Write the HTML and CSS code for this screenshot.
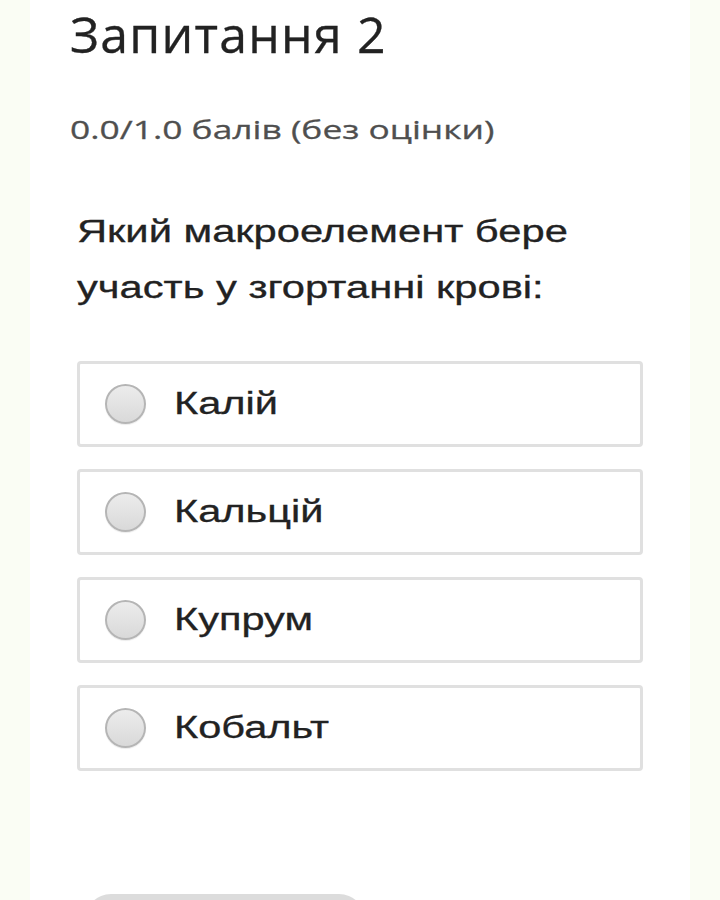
FILE: index.html
```html
<!DOCTYPE html>
<html lang="uk">
<head>
<meta charset="utf-8">
<link rel="stylesheet" href="styles.css">
</head>
<body>
<main class="card">
  <h1 class="title">Запитання 2</h1>
  <p class="score">0.0/1.0 балів (без оцінки)</p>
  <div class="body">
    <p class="question">Який макроелемент бере участь у згортанні крові:</p>
    <ul class="options">
      <li class="option"><span class="radio"></span><span class="label">Калій</span></li>
      <li class="option"><span class="radio"></span><span class="label">Кальцій</span></li>
      <li class="option"><span class="radio"></span><span class="label">Купрум</span></li>
      <li class="option"><span class="radio"></span><span class="label">Кобальт</span></li>
    </ul>
    <div class="actions"><button class="submit" type="button"></button></div>
  </div>
</main>
</body>
</html>
```
FILE: styles.css
```css
html, body {
  margin: 0;
  padding: 0;
  background: #fafdf4;
  height: 900px;
  overflow: hidden;
}
.card {
  margin: 0 30px;
  background: #ffffff;
  padding: 0 47px 0 40px;
  height: 900px;
  box-sizing: border-box;
  overflow: hidden;
}
.title {
  margin: 0;
  padding: 0;
  font-family: "Open Sans", sans-serif;
  font-weight: 400;
  font-size: 50px;
  line-height: 68px;
  letter-spacing: 1.2px;
  color: #222222;
  -webkit-text-stroke: 0.3px #222222;
}
.score {
  width: max-content;
  margin: 41px 0 0;
  font-family: "Open Sans", sans-serif;
  font-size: 26px;
  line-height: 40px;
  color: #4f4f4f;
  transform: scaleX(1.36);
  transform-origin: 0 50%;
  -webkit-text-stroke: 0.3px #4f4f4f;
}
.body {
  padding-left: 7px;
}
.question {
  width: 425px;
  margin: 55px 0 0;
  font-family: "Liberation Sans", Arial, sans-serif;
  font-size: 31px;
  line-height: 56px;
  color: #222222;
  transform: scaleX(1.345);
  transform-origin: 0 0;
  -webkit-text-stroke: 0.3px #222222;
}
.options {
  list-style: none;
  margin: 45px 0 0;
  padding: 0;
  display: flex;
  flex-direction: column;
  gap: 22px;
}
.option {
  height: 86px;
  box-sizing: border-box;
  border: 3px solid #e0e0e0;
  border-radius: 4px;
  display: flex;
  align-items: center;
  padding-left: 25px;
  gap: 28px;
}
.radio {
  width: 41px;
  height: 40px;
  box-sizing: border-box;
  border-radius: 50%;
  border: 2px solid #b5b5b5;
  background: linear-gradient(#ececec, #d9d9d9);
  box-shadow: 0 1px 1px rgba(0,0,0,0.08);
  flex: none;
}
.label {
  display: inline-block;
  font-family: "Liberation Sans", Arial, sans-serif;
  font-size: 31px;
  color: #222222;
  transform: scaleX(1.34);
  transform-origin: 0 50%;
  -webkit-text-stroke: 0.3px #222222;
}
.actions {
  margin-top: 123px;
  padding-left: 8px;
}
.submit {
  display: block;
  width: 280px;
  height: 60px;
  border: none;
  border-radius: 26px;
  background: #dcdcdc;
}
```
